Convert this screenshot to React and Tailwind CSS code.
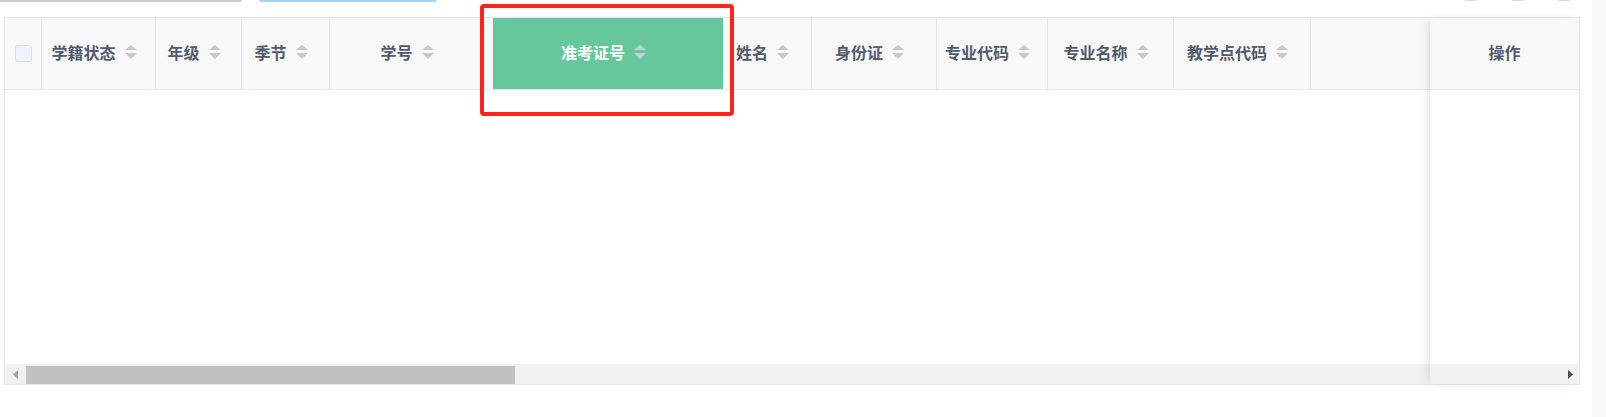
import React from "react";

const SortIcon = ({ color = "#c5c8ce" }) => (
  <svg width="12" height="14" viewBox="0 0 12 14" className="shrink-0">
    <polygon points="0,5 6,0 12,5" fill={color} />
    <polygon points="0,8 12,8 6,14" fill={color} />
  </svg>
);

const HeadCell = ({ w, label, sort = true, border = true, green = false }) => (
  <div
    className={
      "h-full flex items-center justify-center shrink-0 box-border pb-[4px] " +
      (border ? "border-r border-[#e3e7ee] " : "") +
      (green ? "bg-[#67c79c] text-white " : "text-[#515a6e] ")
    }
    style={{ width: w }}
  >
    <div className="flex items-center pr-[9px]">
      <span className="text-[16px] font-bold leading-none">{label}</span>
      {sort && (
        <span className="ml-[9px] flex items-center">
          <SortIcon color={green ? "#c9cdd4" : "#c5c8ce"} />
        </span>
      )}
    </div>
  </div>
);

const cols = [
  { w: 114, label: "学籍状态" },
  { w: 86, label: "年级" },
  { w: 88, label: "季节" },
  { w: 163, label: "学号", border: false },
  { w: 230, label: "准考证号", border: false, green: true },
  { w: 89, label: "姓名" },
  { w: 125, label: "身份证" },
  { w: 111, label: "专业代码" },
  { w: 126, label: "专业名称" },
  { w: 137, label: "教学点代码" },
];

export default function App() {
  return (
    <div
      className="w-[1606px] h-[417px] bg-white flex overflow-hidden relative"
      style={{ fontFamily: '"Noto Sans CJK SC", "Microsoft YaHei", "Noto Sans", sans-serif' }}
    >
      <div className="w-[1592px] flex flex-col">
        {/* remnants of controls above */}
        <div className="h-[2px] flex items-start">
          <div className="w-[242px] h-[2px] bg-[#cbcbcb] rounded-br-[2px]" />
          <div className="ml-[17px] w-[178px] h-[2px] bg-[#a6d2fe] rounded-b-[2px]" />
          <div className="ml-[1028px] w-[12px] h-[1px] bg-[#d5d8e0] rounded-b-full" />
          <div className="ml-[35px] w-[12px] h-[1px] bg-[#d5d8e0] rounded-b-full" />
          <div className="ml-[34px] w-[12px] h-[1px] bg-[#d5d8e0] rounded-b-full" />
        </div>

        {/* table */}
        <div className="mt-[15px] ml-[4px] w-[1576px] h-[368px] border border-[#e3e7ee] border-b-[#e2e7f4] relative flex flex-col">
          {/* header */}
          <div className="h-[72px] bg-[#f8f8f9] border-b border-[#e3e7ee] flex shrink-0">
            <div className="w-[37px] h-full border-r border-[#e3e7ee] flex items-center justify-center shrink-0 box-border">
              <div className="w-[17px] h-[17px] rounded-[3px] border border-[#dcdee2] bg-[#eef3fc]" />
            </div>
            {cols.map((c) => (
              <HeadCell key={c.label} {...c} />
            ))}
          </div>
          {/* body */}
          <div className="h-[274px] bg-white shrink-0" />
          {/* scrollbar */}
          <div className="h-[20px] bg-[#f1f1f1] flex items-stretch shrink-0">
            <div className="w-[21px] flex items-center justify-center">
              <svg width="5" height="9" viewBox="0 0 5 9">
                <polygon points="5,0 5,9 0,4.5" fill="#a3a3a3" />
              </svg>
            </div>
            <div className="w-[489px] mt-[2px] bg-[#c1c1c1]" />
          </div>

          {/* fixed right column */}
          <div className="absolute right-0 top-0 bottom-0 w-[149px] flex flex-col shadow-[-3px_0_10px_-3px_rgba(0,0,0,0.16)]">
            <div className="h-[72px] bg-[#f8f8f9] border-b border-[#e3e7ee] flex items-center justify-center pb-[3px] shrink-0">
              <span className="text-[16px] font-bold text-[#515a6e] leading-none">操作</span>
            </div>
            <div className="h-[274px] bg-white shrink-0" />
            <div className="h-[20px] bg-[#f1f1f1] flex items-center justify-end pr-[6px] shrink-0">
              <svg width="5" height="9" viewBox="0 0 5 9">
                <polygon points="0,0 0,9 5,4.5" fill="#505050" />
              </svg>
            </div>
          </div>

          {/* highlight frame */}
          <div className="absolute left-[475px] top-[-14px] w-[254px] h-[112px] border-[4px] border-[#ff2419] rounded-[4px] pointer-events-none" />
        </div>
      </div>
      <div className="flex-1 bg-[#f9f9f9]" />
    </div>
  );
}
